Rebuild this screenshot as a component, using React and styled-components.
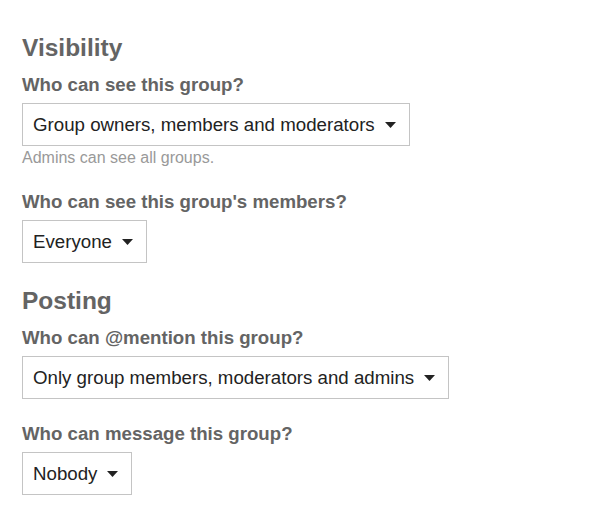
import React from 'react';
import styled, { createGlobalStyle } from 'styled-components';

const GlobalStyle = createGlobalStyle`
  html, body {
    margin: 0;
    padding: 0;
    background: #ffffff;
    font-family: 'Liberation Sans', Arial, sans-serif;
  }
`;

const StyledWrapper = styled.div`
  padding: 34px 22px 0 22px;
  display: flex;
  flex-direction: column;
  gap: 24px;
`;

const StyledSection = styled.section`
  display: flex;
  flex-direction: column;
  gap: 24px;
`;

const StyledHeading = styled.h2`
  margin: 0 0 -12px 0;
  font-size: 24.5px;
  line-height: 28px;
  font-weight: 700;
  color: #646464;
`;

const StyledField = styled.div`
  display: flex;
  flex-direction: column;
  align-items: flex-start;
`;

const StyledLabel = styled.label`
  font-size: 18.67px;
  line-height: 21px;
  font-weight: 700;
  color: #646464;
  margin-bottom: 8px;
`;

const StyledSelect = styled.div`
  display: flex;
  align-items: center;
  gap: 10px;
  height: 41px;
  padding: 0 13px 0 10px;
  border: 1px solid #c4c4c4;
  background: #ffffff;
  font-size: 18.7px;
  color: #222222;
  cursor: pointer;
`;

const StyledHint = styled.p`
  margin: 3px 0 0 0;
  font-size: 16px;
  line-height: 18px;
  color: #999999;
`;

const Caret = () => (
  <svg width="11" height="6" viewBox="0 0 11 6" aria-hidden="true">
    <path d="M0 0 H11 L5.5 6 Z" fill="#222222" />
  </svg>
);

const Select = ({ value }) => (
  <StyledSelect>
    <span>{value}</span>
    <Caret />
  </StyledSelect>
);

const App = () => (
  <>
    <GlobalStyle />
    <StyledWrapper>
      <StyledSection>
        <StyledHeading>Visibility</StyledHeading>
        <StyledField>
          <StyledLabel>Who can see this group?</StyledLabel>
          <Select value="Group owners, members and moderators" />
          <StyledHint>Admins can see all groups.</StyledHint>
        </StyledField>
        <StyledField>
          <StyledLabel>Who can see this group's members?</StyledLabel>
          <Select value="Everyone" />
        </StyledField>
      </StyledSection>
      <StyledSection>
        <StyledHeading>Posting</StyledHeading>
        <StyledField>
          <StyledLabel>Who can @mention this group?</StyledLabel>
          <Select value="Only group members, moderators and admins" />
        </StyledField>
        <StyledField>
          <StyledLabel>Who can message this group?</StyledLabel>
          <Select value="Nobody" />
        </StyledField>
      </StyledSection>
    </StyledWrapper>
  </>
);

export default App;
